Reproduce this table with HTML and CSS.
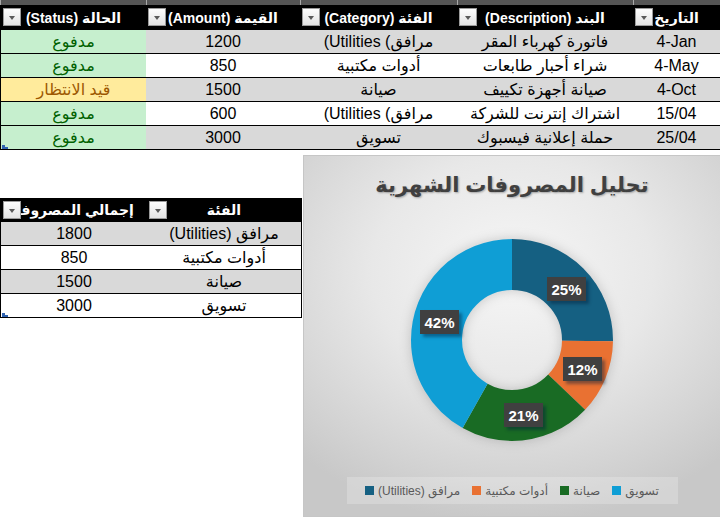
FILE: index.html
```html
<!DOCTYPE html>
<html lang="ar">
<head>
<meta charset="utf-8">
<title>تحليل المصروفات</title>
<link rel="stylesheet" href="styles.css">
</head>
<body>
<div class="sheet">
  <div class="strip" dir="rtl">
    <span></span><span></span><span></span><span></span><span></span>
  </div>
  <div class="tbl main" dir="rtl">
    <div class="row head">
      <div class="cell"><span class="filter"></span>التاريخ</div>
      <div class="cell"><span class="filter"></span>البند (Description)</div>
      <div class="cell"><span class="filter"></span>الفئة (Category)</div>
      <div class="cell"><span class="filter"></span>القيمة (Amount)</div>
      <div class="cell"><span class="filter"></span>الحالة (Status)</div>
    </div>
    <div class="row gray">
      <div class="cell ltr">4-Jan</div>
      <div class="cell">فاتورة كهرباء المقر</div>
      <div class="cell ltr"><span>(Utilities (مرافق</span></div>
      <div class="cell">1200</div>
      <div class="cell paid">مدفوع</div>
    </div>
    <div class="row">
      <div class="cell ltr">4-May</div>
      <div class="cell">شراء أحبار طابعات</div>
      <div class="cell">أدوات مكتبية</div>
      <div class="cell">850</div>
      <div class="cell paid">مدفوع</div>
    </div>
    <div class="row gray">
      <div class="cell ltr">4-Oct</div>
      <div class="cell">صيانة أجهزة تكييف</div>
      <div class="cell">صيانة</div>
      <div class="cell">1500</div>
      <div class="cell pending">قيد الانتظار</div>
    </div>
    <div class="row">
      <div class="cell ltr">15/04</div>
      <div class="cell">اشتراك إنترنت للشركة</div>
      <div class="cell ltr"><span>(Utilities (مرافق</span></div>
      <div class="cell">600</div>
      <div class="cell paid">مدفوع</div>
    </div>
    <div class="row gray">
      <div class="cell ltr">25/04</div>
      <div class="cell">حملة إعلانية فيسبوك</div>
      <div class="cell">تسويق</div>
      <div class="cell">3000</div>
      <div class="cell paid">مدفوع</div>
    </div>
    <span class="handle"></span>
  </div>

  <div class="bottom">
    <div class="left">
      <div class="tbl summary" dir="rtl">
        <div class="row head">
          <div class="cell"><span class="filter"></span>الفئة</div>
          <div class="cell"><span class="filter"></span>إجمالي المصروف</div>
        </div>
        <div class="row gray">
          <div class="cell">مرافق (Utilities)</div>
          <div class="cell">1800</div>
        </div>
        <div class="row">
          <div class="cell">أدوات مكتبية</div>
          <div class="cell">850</div>
        </div>
        <div class="row gray">
          <div class="cell">صيانة</div>
          <div class="cell">1500</div>
        </div>
        <div class="row">
          <div class="cell">تسويق</div>
          <div class="cell">3000</div>
        </div>
        <span class="handle"></span>
      </div>
    </div>

    <div class="chart">
      <div class="chart-title" dir="rtl">تحليل المصروفات الشهرية</div>
      <div class="donut">
        <svg class="donut-svg" width="202" height="202" viewBox="0 0 202 202">
          <g transform="rotate(-90 101 101)">
            <circle cx="101" cy="101" r="75.5" fill="none" stroke="#156082" stroke-width="51" stroke-dasharray="119.42 474.38" stroke-dashoffset="0"/>
            <circle cx="101" cy="101" r="75.5" fill="none" stroke="#E97132" stroke-width="51" stroke-dasharray="56.40 474.38" stroke-dashoffset="-119.42"/>
            <circle cx="101" cy="101" r="75.5" fill="none" stroke="#196B24" stroke-width="51" stroke-dasharray="99.52 474.38" stroke-dashoffset="-175.82"/>
            <circle cx="101" cy="101" r="75.5" fill="none" stroke="#0F9ED5" stroke-width="51" stroke-dasharray="199.04 474.38" stroke-dashoffset="-275.34"/>
          </g>
        </svg>
        <span class="pct" style="left:136px;top:38px">25%</span>
        <span class="pct" style="left:152px;top:118px">12%</span>
        <span class="pct" style="left:93px;top:164px">21%</span>
        <span class="pct" style="left:9px;top:71px">42%</span>
      </div>
      <div class="legend">
        <span class="item"><i class="mk util"></i><span dir="rtl">مرافق (Utilities)</span></span>
        <span class="item"><i class="mk office"></i><span dir="rtl">أدوات مكتبية</span></span>
        <span class="item"><i class="mk maint"></i><span dir="rtl">صيانة</span></span>
        <span class="item"><i class="mk mkt"></i><span dir="rtl">تسويق</span></span>
      </div>
    </div>
  </div>
</div>
</body>
</html>
```

FILE: styles.css
```css
* { box-sizing: border-box; }
html, body { margin: 0; padding: 0; background: #ffffff; }
body {
  width: 720px;
  height: 517px;
  overflow: hidden;
  font-family: "Liberation Sans", "DejaVu Sans", sans-serif;
  color: #000;
}
.sheet { width: 720px; }

/* top strip (row above the header) */
.strip {
  display: grid;
  grid-template-columns: 87px 176px 157px 154px 146px;
  height: 5px;
  background: #555555;
}
.strip span { border-left: 1px solid #a8a8a8; }

/* tables */
.tbl { position: relative; }
.main {
  border-left: 1px solid #000;
}
.main .row {
  display: grid;
  grid-template-columns: 87px 176px 157px 154px 145px;
}
.row {
  height: 24px;
  border-bottom: 1px solid #000;
  background: #fff;
}
.row.gray { background: #d9d9d9; }
.row.head {
  height: 25px;
  background: #000;
  border-bottom: 0;
}
.cell {
  position: relative;
  display: flex;
  align-items: center;
  justify-content: center;
  font-size: 16px;
  white-space: nowrap;
  overflow: hidden;
}
.cell.ltr { direction: ltr; unicode-bidi: isolate; }
.cell.ltr span { direction: ltr; unicode-bidi: isolate; }
.head .cell {
  color: #fff;
  font-weight: bold;
  font-size: 14px;
}
.cell.paid { background: #c6efce; color: #006100; }
.cell.pending { background: #ffeb9c; color: #9c5700; }

.filter {
  position: absolute;
  left: 2px;
  top: 3px;
  width: 18px;
  height: 18px;
  border: 1px solid #9b9b9b;
  background: linear-gradient(#fdfdfd, #e3e3e3);
  z-index: 2;
}
.filter::after {
  content: "";
  position: absolute;
  left: 5px;
  top: 7px;
  border-left: 3.5px solid transparent;
  border-right: 3.5px solid transparent;
  border-top: 4px solid #5a5a5a;
}
.handle {
  position: absolute;
  left: 1px;
  bottom: 1px;
  width: 6px;
  height: 4px;
  border-left: 3px solid #2f62b0;
  border-bottom: 2px solid #2f62b0;
}

/* bottom area */
.bottom {
  display: flex;
  align-items: flex-start;
}
.left {
  width: 303px;
  padding-top: 48px;
}
.summary {
  width: 302px;
  border-left: 1px solid #000;
  border-right: 1px solid #000;
}
.summary .row {
  display: grid;
  grid-template-columns: 154px 146px;
}
.summary .row.head { height: 24px; }

/* chart */
.chart {
  width: 417px;
  height: 362px;
  margin-top: 5px;
  border: 1px solid #c6c6c6;
  border-right: 0;
  background: radial-gradient(ellipse 75% 70% at 50% 32%, #f6f6f6 0%, #e8e8e8 45%, #d4d4d4 80%, #c8c8c8 100%);
  display: flex;
  flex-direction: column;
  align-items: center;
}
.chart-title {
  margin-top: 14px;
  height: 30px;
  line-height: 30px;
  font-size: 21px;
  font-weight: bold;
  color: #404040;
  text-shadow: 1px 1px 2px rgba(0, 0, 0, 0.3);
}
.donut {
  position: relative;
  width: 202px;
  height: 202px;
  margin-top: 39px;
}
.donut-svg {
  display: block;
  filter: drop-shadow(0 0 6px rgba(0, 0, 0, 0.18));
}
.pct {
  position: absolute;
  width: 39px;
  height: 24px;
  background: #404040;
  color: #fff;
  font-weight: bold;
  font-size: 15px;
  display: flex;
  align-items: center;
  justify-content: center;
  box-shadow: 3px 3px 3px rgba(0, 30, 60, 0.45);
}
.legend {
  margin-top: 36px;
  width: 331px;
  height: 27px;
  background: rgba(255, 255, 255, 0.22);
  display: flex;
  align-items: center;
  justify-content: center;
  gap: 12px;
  font-size: 12px;
  color: #595959;
  direction: ltr;
}
.item { display: flex; align-items: center; }
.mk {
  display: inline-block;
  width: 9px;
  height: 9px;
  margin-right: 4px;
}
.mk.util { background: #156082; }
.mk.office { background: #E97132; }
.mk.maint { background: #196B24; }
.mk.mkt { background: #0F9ED5; }
```
